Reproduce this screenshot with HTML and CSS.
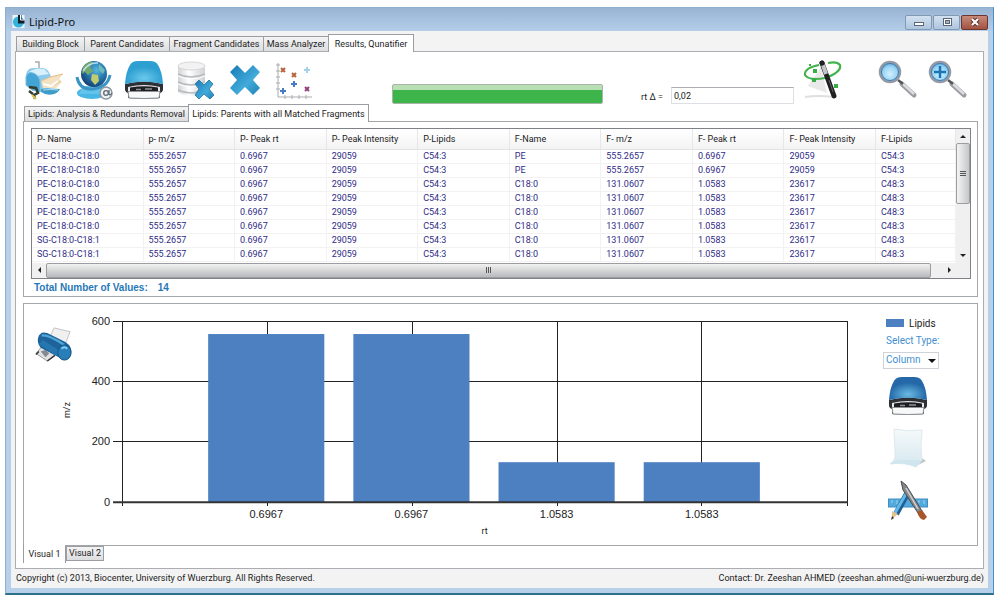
FILE: index.html
```html
<!DOCTYPE html>
<html lang="en">
<head>
<meta charset="utf-8">
<title>Lipid-Pro</title>
<link rel="stylesheet" href="styles.css">
</head>
<body>
<svg class="defs" width="0" height="0" aria-hidden="true">
  <defs>
    <linearGradient id="cross" x1="0" y1="0" x2="1" y2="1"><stop offset="0" stop-color="#1579b4"/><stop offset=".6" stop-color="#42abda"/><stop offset="1" stop-color="#1d80b5"/></linearGradient>
    <radialGradient id="shine" cx=".5" cy=".75" r=".5"><stop offset="0" stop-color="#7fd6f5" stop-opacity=".75"/><stop offset="1" stop-color="#7fd6f5" stop-opacity="0"/></radialGradient>
    <radialGradient id="earth" cx=".6" cy=".35" r=".7"><stop offset="0" stop-color="#58b8dd"/><stop offset=".5" stop-color="#2878ae"/><stop offset="1" stop-color="#123c70"/></radialGradient>
    <radialGradient id="lens" cx=".5" cy=".6" r=".6"><stop offset="0" stop-color="#d2f0fd"/><stop offset=".6" stop-color="#9bd5f5"/><stop offset="1" stop-color="#4f9fd6"/></radialGradient>
    <linearGradient id="metal" x1="0" y1="0" x2="1" y2="0"><stop offset="0" stop-color="#d2d3d5"/><stop offset=".4" stop-color="#fff"/><stop offset="1" stop-color="#d0d1d4"/></linearGradient>
    <linearGradient id="sheet" x1="0" y1="0" x2="0" y2="1"><stop offset="0" stop-color="#f5f9fa"/><stop offset=".8" stop-color="#dcebf1"/><stop offset="1" stop-color="#c4dfeb"/></linearGradient>
    <symbol id="drive" viewBox="0 0 40 40">
      <path d="M1 24Q20 19 39 24V29Q39 32 36 33V38Q20 40 4 38V33Q1 32 1 29Z" fill="#2d3034"/>
      <path d="M1 24Q2 11 6 5 8 1 14 1H26Q32 1 34 5 38 11 39 24 20 19 1 24Z" fill="currentColor"/>
      <path d="M1 24Q2 11 6 5 8 1 14 1H26Q32 1 34 5 38 11 39 24 20 19 1 24Z" fill="url(#shine)"/>
      <path d="M4 27Q20 23 36 27V31H4Z" fill="#e6e8ea"/>
      <path d="M6 27.500Q20 25 34 27.500V31H6Z" fill="#1c1e21"/>
      <path d="M12 29.500H17M21 29H28" stroke="#8d9197" stroke-width="1.500"/>
      <path d="M4 31.500H36L35 38Q20 39 5 38Z" fill="#f7f8f8" stroke="#8f9398"/>
    </symbol>
    <symbol id="glass" viewBox="0 0 40 40">
      <path d="M24 24 36 35" stroke="#9a9ca1" stroke-width="5" stroke-linecap="round"/>
      <path d="M24 23 36 34" stroke="#dcdde0" stroke-width="2.500"/>
      <path d="M20 20 25 24" stroke="#55575b" stroke-width="2.500"/>
      <circle cx="12" cy="12" r="10" fill="url(#lens)" stroke="#9499a3" stroke-width="2.500"/>
      <circle cx="12" cy="12" r="8.500" fill="none" stroke="#3b7fb6"/>
    </symbol>
  </defs>
</svg>

<main class="window">
  <header class="titlebar">
    <svg class="app-icon" viewBox="0 0 12 14"><rect width="12" height="13" y="1" fill="#e9f4fa"/><circle cx="6" cy="8" r="5.500" fill="#35b1dc"/><path d="M5.500 1V9.500H12V6L9 5V1Z" fill="#101c28"/><path d="M8 1V6H12" fill="none" stroke="#fff"/></svg>
    <h1 class="title">Lipid-Pro</h1>
    <div class="window-buttons">
      <button class="win-btn" type="button" aria-label="Minimize"><svg width="12" height="10" viewBox="0 0 12 10"><rect x="1.500" y="5.500" width="9" height="3" fill="#fff" stroke="#5c6674"/></svg></button>
      <button class="win-btn" type="button" aria-label="Maximize"><svg width="12" height="10" viewBox="0 0 12 10"><rect x="2.500" y="1.500" width="8" height="7" fill="#fff" stroke="#5c6674"/><rect x="4.500" y="3.500" width="4" height="3" fill="#9fb4cc" stroke="#5c6674"/></svg></button>
      <button class="win-btn close" type="button" aria-label="Close"><svg width="12" height="10" viewBox="0 0 12 10"><path d="M3 2 9 8M9 2 3 8" stroke="#5b2d25" stroke-width="4"/><path d="M3 2 9 8M9 2 3 8" stroke="#fff" stroke-width="2.200"/></svg></button>
    </div>
  </header>

  <div class="client">
    <nav class="tabs main-tabs" role="tablist">
      <button class="tab t-block" role="tab">Building Block</button>
      <button class="tab t-parent" role="tab">Parent Candidates</button>
      <button class="tab t-fragment" role="tab">Fragment Candidates</button>
      <button class="tab t-mass" role="tab">Mass Analyzer</button>
      <button class="tab t-results active" role="tab" aria-selected="true">Results, Qunatifier</button>
    </nav>

    <section class="page">
      <div class="toolbar">
        <button class="tool" type="button" aria-label="Mailbox"><svg viewBox="0 0 40 40">
          <path d="M11 2H15V12" fill="none" stroke="#a7abb0" stroke-width="1.500"/>
          <path d="M2 25V15Q3 8 9 8H19Q25 9 27 17L29 27 16 32Z" fill="#8ccbed"/>
          <path d="M4 13Q10 7 20 9L25 14 12 16Z" fill="#d9effa"/>
          <path d="M2 25V17Q4 11 9 13 15 15 16 22V32L8 30Z" fill="#43a5d6" stroke="#79bcdc"/>
          <path d="M17 21 26 17 39 14 35 19 38 22 32 28 19 28Z" fill="#f3e1c2"/>
          <path d="M17 21 26 17 39 14M30 25 37 21" fill="none" stroke="#e3bf86"/>
          <path d="M19 24 27 26 34 21" fill="none" stroke="#fff" stroke-width="2"/>
          <path d="M17 29Q25 28 36 29 34 33 30 34 23 36 17 32Z" fill="#3f9cc9"/><path d="M19 30Q26 29 34 30" fill="none" stroke="#a9dcf0"/>
          <path d="M5 27 12 28 14 33 10 35 11 39M5 31 9 34" fill="none" stroke="#333e32" stroke-width="2.500"/>
          <path d="M8 35 12 39" stroke="#e3c755" stroke-width="2"/>
        </svg></button>
        <button class="tool" type="button" aria-label="Web"><svg viewBox="0 0 40 40">
          <ellipse cx="18" cy="33" rx="15" ry="6" fill="#48b7e5"/><path d="M9 26H27L31 34H5Z" fill="#62c4eb"/>
          <path d="M3 17Q5 30 19 29 34 27 36 15" fill="none" stroke="#3995c5" stroke-width="3"/>
          <circle cx="20" cy="14" r="13" fill="url(#earth)"/>
          <path d="M9 7Q14 1 19 2L16 7 19 11 14 15 11 12 8 14Z" fill="#74a86d"/><path d="M18 14 24 15 25 21 21 25 17 20Z" fill="#c1cc71"/><path d="M25 4 31 10 29 14 25 10Z" fill="#6ebbb7"/>
          <path d="M9 11Q15 2 24 3" fill="none" stroke="#d6f0fb" stroke-width="1.500" opacity=".8"/>
          <circle cx="32" cy="33" r="6" fill="#eef2f5" stroke="#8c969f" stroke-width="1.500"/><circle cx="32" cy="33" r="2.300" fill="none" stroke="#5d6974" stroke-width="1.300"/><path d="M35 30V34Q36 36 38 33" fill="none" stroke="#5d6974" stroke-width="1.300"/>
        </svg></button>
        <button class="tool cyan" type="button" aria-label="Save to drive"><svg viewBox="0 0 40 40"><use href="#drive"/></svg></button>
        <button class="tool" type="button" aria-label="Delete data"><svg viewBox="0 0 40 40">
          <path d="M4 6V32Q17 40 31 32V6Z" fill="url(#metal)"/><ellipse cx="17.500" cy="6" rx="13.500" ry="4" fill="#f2f2f3" stroke="#d6d7d9"/>
          <path d="M4 14Q17 20 31 14M4 22Q17 28 31 22M4 30Q17 36 31 30" fill="none" stroke="#b9bbbe" stroke-width="1.500"/>
          <path d="M4 16Q17 22 31 16M4 24Q17 30 31 24" fill="none" stroke="#fff"/>
          <path d="M21 24 25 20 30 25 35 20 39 24 35 29 40 35 36 39 30 34 25 39 21 35 25 29Z" fill="url(#cross)" stroke="#3a83ac"/>
        </svg></button>
        <button class="tool" type="button" aria-label="Remove"><svg viewBox="0 0 40 40"><path d="M6 12 13 5 21 13 29 5 36 12 29 20 36 28 29 35 21 27 13 35 6 28 13 20Z" fill="url(#cross)"/></svg></button>
        <button class="tool" type="button" aria-label="Scatter plot"><svg viewBox="0 0 40 40">
          <path d="M4 3V37H38M2 5h4M2 11h4M2 17h4M2 23h4M2 29h4M11 35v4M18 35v4M25 35v4M32 35v4" fill="none" stroke="#a9abaf"/>
          <path d="M7 8 11 12M11 8 7 12M18 13 22 17M22 13 18 17" stroke="#b5643c" stroke-width="2"/>
          <path d="M31 27 35 31M35 27 31 31" stroke="#944079" stroke-width="2"/>
          <path d="M20 21v6M17 24h6M9 28v6M6 31h6" stroke="#477cc5" stroke-width="2"/><path d="M33 7v6M30 10h6" stroke="#a5d1ec" stroke-width="2"/>
        </svg></button>
        <div class="progress" role="progressbar" aria-label="Progress" aria-valuenow="100" aria-valuemin="0" aria-valuemax="100"></div>
        <label class="rt-label" for="rt">rt Δ =</label>
        <input class="rt-input" id="rt" type="text" value="0,02">
        <button class="tool wand" type="button" aria-label="Wizard"><svg viewBox="0 0 40 40">
          <path d="M18 7 5 26 24 33Z" fill="#d3d4d6" opacity=".5"/><path d="M2 37Q15 35 31 37" fill="none" stroke="#dedfe0" stroke-width="2"/>
          <path d="M16 5Q1 8 2 15 6 21 22 18 39 12 37 5 34 1 25 3" fill="none" stroke="#43b34e" stroke-width="2.200"/>
          <path d="M19 3 31 36" stroke="#202123" stroke-width="5" stroke-linecap="round"/><path d="M20 5 23 14" stroke="#c4c5c7" stroke-width="4"/><path d="M26 20 30 32" stroke="#606164"/>
          <circle cx="19" cy="3" r="2.500" fill="#222"/><path d="M10 9h4v4h-4zM9 18h4v4h-4zM31 24h4v4h-4zM6 4h2v2h-2z" fill="#36ad45"/>
        </svg></button>
        <button class="tool" type="button" aria-label="Search"><svg viewBox="0 0 40 40"><use href="#glass"/></svg></button>
        <button class="tool" type="button" aria-label="Zoom in"><svg viewBox="0 0 40 40"><use href="#glass"/><path d="M12 6V18M6 12H18" stroke="#1976b3" stroke-width="2.500"/></svg></button>
      </div>

      <nav class="tabs inner-tabs" role="tablist">
        <button class="tab t-analysis" role="tab">Lipids: Analysis &amp; Redundants Removal</button>
        <button class="tab t-matched active" role="tab" aria-selected="true">Lipids: Parents with all Matched Fragments</button>
      </nav>

      <section class="panel data-panel">
        <div class="listview">
          <table class="grid">
            <colgroup><col class="c-first"><col><col><col><col><col><col><col><col><col class="c-last"></colgroup>
            <thead><tr><th>P- Name</th><th>p- m/z</th><th>P- Peak rt</th><th>P- Peak Intensity</th><th>P-Lipids</th><th>F-Name</th><th>F- m/z</th><th>F- Peak rt</th><th>F- Peak Intensity</th><th>F-Lipids</th></tr></thead>
            <tbody>
              <tr><td>PE-C18:0-C18:0</td><td>555.2657</td><td>0.6967</td><td>29059</td><td>C54:3</td><td>PE</td><td>555.2657</td><td>0.6967</td><td>29059</td><td>C54:3</td></tr>
              <tr><td>PE-C18:0-C18:0</td><td>555.2657</td><td>0.6967</td><td>29059</td><td>C54:3</td><td>PE</td><td>555.2657</td><td>0.6967</td><td>29059</td><td>C54:3</td></tr>
              <tr><td>PE-C18:0-C18:0</td><td>555.2657</td><td>0.6967</td><td>29059</td><td>C54:3</td><td>C18:0</td><td>131.0607</td><td>1.0583</td><td>23617</td><td>C48:3</td></tr>
              <tr><td>PE-C18:0-C18:0</td><td>555.2657</td><td>0.6967</td><td>29059</td><td>C54:3</td><td>C18:0</td><td>131.0607</td><td>1.0583</td><td>23617</td><td>C48:3</td></tr>
              <tr><td>PE-C18:0-C18:0</td><td>555.2657</td><td>0.6967</td><td>29059</td><td>C54:3</td><td>C18:0</td><td>131.0607</td><td>1.0583</td><td>23617</td><td>C48:3</td></tr>
              <tr><td>PE-C18:0-C18:0</td><td>555.2657</td><td>0.6967</td><td>29059</td><td>C54:3</td><td>C18:0</td><td>131.0607</td><td>1.0583</td><td>23617</td><td>C48:3</td></tr>
              <tr><td>SG-C18:0-C18:1</td><td>555.2657</td><td>0.6967</td><td>29059</td><td>C54:3</td><td>C18:0</td><td>131.0607</td><td>1.0583</td><td>23617</td><td>C48:3</td></tr>
              <tr><td>SG-C18:0-C18:1</td><td>555.2657</td><td>0.6967</td><td>29059</td><td>C54:3</td><td>C18:0</td><td>131.0607</td><td>1.0583</td><td>23617</td><td>C48:3</td></tr>
            </tbody>
          </table>
          <div class="vscroll">
            <svg class="arrow" viewBox="0 0 14 14"><path d="M4 9 7 6 10 9Z"/></svg>
            <div class="vthumb"><i></i><i></i><i></i></div>
            <svg class="arrow down" viewBox="0 0 14 14"><path d="M4 6 7 9 10 6Z"/></svg>
          </div>
          <div class="hscroll">
            <svg class="arrow" viewBox="0 0 14 14"><path d="M9 4 6 7 9 10Z"/></svg>
            <div class="hthumb"><i></i><i></i><i></i></div>
            <svg class="arrow" viewBox="0 0 14 14"><path d="M6 4 9 7 6 10Z"/></svg>
          </div>
          <div class="corner"></div>
        </div>
        <p class="total"><span>Total Number of Values:</span><span>14</span></p>
      </section>

      <section class="panel chart-panel">
        <div class="chart-left">
          <button class="print" type="button" aria-label="Print"><svg viewBox="0 0 40 38">
            <path d="M20 2 37 6 32 19 15 13Z" fill="#f0f0f1" stroke="#bfc1c4"/>
            <path d="M7 22 22 30 13 37 1 29Z" fill="#e1e2e3" stroke="#95989c"/><path d="M6 27 11 25 15 29 11 33Z" fill="#858a91"/><path d="M4 27 1 30M21 31 13 37" stroke="#333" stroke-width="1.500"/>
            <path d="M7 7Q12 6 16 9L32 17Q40 22 38 31 34 38 27 34L6 23Q1 17 4 10Z" fill="#1e639b"/>
            <path d="M7 10Q14 9 31 20" fill="none" stroke="#4fa6d8" stroke-width="2.500"/><path d="M6 17 25 29" stroke="#2677b0" stroke-width="6"/>
            <ellipse cx="31" cy="28" rx="7" ry="8" fill="#287eb9" stroke="#15547f"/><path d="M28 24Q31 21 34 24" fill="none" stroke="#83d0f2" stroke-width="2"/>
          </svg></button>
          <span class="axis-y">m/z</span>
        </div>
        <svg class="chart" viewBox="80 304 790 241" role="img" aria-label="m/z by rt">
          <g class="rules" fill="none">
            <path d="M113 321H847M113 381H847M113 441H847"/>
            <path d="M267 321V506M412 321V506M557 321V506M701 321V506M847 321V506M122 321V506"/>
          </g>
          <g fill="#4c80c1"><rect x="208" y="334" width="116" height="168"/><rect x="353" y="334" width="116" height="168"/><rect x="498" y="462" width="116" height="40"/><rect x="643" y="462" width="116" height="40"/></g>
          <path d="M113 502H847" stroke="#333" stroke-width="2"/>
          <g class="ticks" text-anchor="end"><text x="110" y="325">600</text><text x="110" y="385">400</text><text x="110" y="445">200</text><text x="110" y="506">0</text></g>
          <g class="ticks" text-anchor="middle"><text x="266" y="518">0.6967</text><text x="411" y="518">0.6967</text><text x="556" y="518">1.0583</text><text x="701" y="518">1.0583</text></g>
          <text class="axis-x" x="484" y="534" text-anchor="middle">rt</text>
        </svg>
        <aside class="chart-side">
          <div class="legend"><span class="swatch"></span>Lipids</div>
          <label class="type-label" for="type">Select Type:</label>
          <div class="select-wrap"><select class="type" id="type"><option>Column</option></select><svg class="caret" viewBox="0 0 8 5"><path d="M0 1H8L4 5Z" fill="#111"/></svg></div>
          <button class="side-tool deep" type="button" aria-label="Save chart"><svg viewBox="0 0 40 40"><use href="#drive"/></svg></button>
          <button class="side-tool" type="button" aria-label="New sheet"><svg viewBox="0 0 40 40"><path d="M28 38 38 33 34 30Z" fill="#bfc4c7"/><path d="M6 1Q20 4 34 2 32 18 34 32L28 39Q17 34 2 36 8 32 7 25Z" fill="url(#sheet)" stroke="#dfe9ed"/><path d="M2 36Q7 31 18 32L34 32 28 39Q17 34 2 36Z" fill="#d0e6ef"/></svg></button>
          <button class="side-tool" type="button" aria-label="Drawing tools"><svg viewBox="0 0 40 40">
            <rect x=".5" y="19" width="39" height="8" fill="#54a9dc" stroke="#3d8fc4"/><path d="M4 20v3M9 20v4M14 20v3M26 20v4M31 20v3M36 20v4" stroke="#9ed3ef"/>
            <path d="M20 12 8 34" stroke="#225f96" stroke-width="6"/><path d="M19 12 7 33" stroke="#62bae9" stroke-width="3"/><path d="M4 31 10 34 4 39Z" fill="#e6c48b"/><path d="M4 36 3 40 6 38Z" fill="#333"/>
            <path d="M13 1 18 5 34 31 30 33 15 10Z" fill="#85878b" stroke="#4a4c50"/><path d="M18 8 30 29" stroke="#d2d3d5" stroke-width="1.500"/><path d="M29 32 34 30 39 37 36 40Q31 39 29 32Z" fill="#a6562a"/>
          </svg></button>
        </aside>
      </section>

      <nav class="tabs bottom-tabs" role="tablist">
        <button class="tab t-v1 active" role="tab" aria-selected="true">Visual 1</button>
        <button class="tab t-v2" role="tab">Visual 2</button>
      </nav>
    </section>

    <footer class="status"><span>Copyright (c) 2013, Biocenter, University of Wuerzburg. All Rights Reserved.</span><span>Contact: Dr. Zeeshan AHMED (zeeshan.ahmed@uni-wuerzburg.de)</span></footer>
  </div>
</main>
</body>
</html>
```
FILE: styles.css
```css
* { box-sizing: border-box; }

body {
  margin: 0;
  padding: 7px 6px 6px 5px;
  min-height: 100vh;
  display: flex;
  background: #fff;
  color: #1c1c1c;
  font: 9px/12px Roboto, "Liberation Sans", sans-serif;
}

.defs { position: absolute; }

button, input, select { font: inherit; color: inherit; }
button { padding: 0; border: 0; background: none; }
svg { display: block; }

/* Window frame */
.window {
  flex: 1;
  display: flex;
  flex-direction: column;
  padding: 0 5px 5px;
  background: #b7d0ea;
  border: 1px solid #8eb0d0;
  border-right-color: #4a90c8;
  border-bottom: 2px solid #2c6f88;
}

.titlebar {
  display: flex;
  align-items: center;
  height: 23px;
  margin: 0 -5px;
  padding: 0 5px 0 6px;
  background: linear-gradient(#98b4d3, #b4cee9);
}

.app-icon { width: 13px; height: 14px; margin-top: 3px; }
.title { margin: 4px 0 0 4px; font: 11px/14px "Noto Sans", sans-serif; color: #111; }
.window-buttons { display: flex; gap: 1px; margin: 5px 0 0 auto; }

.win-btn {
  width: 27px;
  height: 15px;
  display: grid;
  place-items: center;
  border: 1px solid #8398b1;
  border-radius: 2px;
  background: linear-gradient(#d3e1f0, #adc5de);
}
.close { border-color: #6d352d; background: linear-gradient(#c98a7b, #a1533f); }

.client { flex: 1; display: flex; flex-direction: column; padding: 3px 4px 0; background: #f3f3f3; }

/* Tabs */
.tabs { display: flex; align-items: flex-end; }
.tab {
  height: 15px;
  margin-left: -1px;
  border: 1px solid #9a9da1;
  border-bottom: 0;
  background: linear-gradient(#f4f4f4, #dcdddf);
  white-space: nowrap;
}
.tab.active { position: relative; height: 18px; margin-bottom: -1px; background: #fff; }

.main-tabs { padding-left: 2px; }
.t-block { width: 69px; }
.t-parent { width: 86px; }
.t-fragment { width: 95px; }
.t-mass { width: 66px; }
.t-results { width: 86px; }

.page { flex: 1; padding: 0 5px 0 7px; border: 1px solid #abadb3; background: #fff; }

/* Toolbar */
.toolbar { display: flex; align-items: flex-end; height: 52px; padding-right: 5px; }
.tool { width: 50px; height: 44px; margin-bottom: 2px; display: grid; place-items: center; }
.tool:first-child { margin-left: -4px; }
.tool svg { width: 40px; height: 40px; }
.tool.cyan { color: #2d9fd0; }
.wand { margin-right: 25px; }

.progress {
  flex: 0 1 211px;
  height: 20px;
  margin-left: 73px;
  border: 1px solid #a9b3a9;
  border-radius: 2px;
  background: linear-gradient(#b9dfb4 0 5px, #3eb54b 5px);
}
.rt-label { margin: 0 8px 1px auto; }
.rt-input {
  width: 123px;
  height: 17px;
  margin: 0 4px 0 0;
  padding: 0 2px;
  border: 1px solid #dcdfe3;
  border-top-color: #abadb3;
  background: #fff;
}

.inner-tabs { padding-left: 2px; }
.t-analysis { width: 165px; }
.t-matched { width: 181px; }

.panel { border: 1px solid #a5a8ab; background: #fff; }
.data-panel { padding: 6px 6px 0 7px; }

/* List view */
.listview {
  display: grid;
  grid-template-columns: 1fr 14px;
  border: 1px solid #7e8186;
}
.grid { width: 100%; table-layout: fixed; border-collapse: collapse; }
.c-first { width: 111px; }
.c-last { width: 80px; }
th {
  height: 20px;
  padding: 0 0 0 5px;
  border-right: 1px solid #e6e7e8;
  border-bottom: 1px solid #e2e3e5;
  background: linear-gradient(#fff, #f3f3f4);
  font-weight: 400;
  text-align: left;
  white-space: nowrap;
}
td {
  height: 14px;
  padding: 0 0 0 5px;
  border: 1px solid #f3f1f2;
  border-width: 0 1px 1px 0;
  color: #2f2c86;
  white-space: nowrap;
}
.vscroll { display: flex; flex-direction: column; background: #f0f0f0; }
.hscroll { display: flex; height: 15px; margin-top: 1px; background: #f0f0f0; }
.corner { background: #f0f0f0; }
.arrow { flex: none; width: 14px; height: 14px; fill: #222; }
.arrow.down { margin-top: auto; }
.vthumb, .hthumb { display: flex; align-items: center; justify-content: center; gap: 1px; border: 1px solid #9b9da0; border-radius: 2px; }
.vthumb { flex: 0 0 61px; flex-direction: column; background: linear-gradient(90deg, #f4f4f4, #c6c7c9); }
.hthumb { flex: 1; margin-right: 11px; background: linear-gradient(#f2f2f2, #b8b9bb); }
.vthumb i { width: 6px; height: 1px; background: #555; }
.hthumb i { width: 1px; height: 6px; background: #555; }

.total {
  display: flex;
  gap: 10px;
  margin: 2px 0 1px 3px;
  color: #2878b8;
  font: bold 10px/14px "Liberation Sans", sans-serif;
}

/* Chart */
.chart-panel { display: flex; margin-top: 6px; }
.chart-left { flex: 0 0 56px; display: flex; flex-direction: column; padding: 22px 0 0 11px; }
.print, .print svg { width: 38px; height: 36px; }
.axis-y { margin: 40px 0 0 26px; writing-mode: vertical-rl; transform: rotate(180deg); align-self: flex-start; }
.chart { flex: 1; min-width: 0; }
.rules { stroke: #222; stroke-width: 1; shape-rendering: crispEdges; }
.ticks { font: 11px "Liberation Sans", sans-serif; fill: #222; }
.axis-x { font: 9px Roboto, sans-serif; fill: #222; }

.chart-side { flex: 0 0 106px; display: flex; flex-direction: column; align-items: flex-start; padding: 13px 0 0 12px; }
.legend { display: flex; align-items: center; gap: 5px; margin-left: 3px; font-size: 9px; line-height: 13px; }
.swatch { width: 18px; height: 8px; background: #4c80c1; }
.type-label { margin: 4px 0 5px 3px; color: #3f8fd0; font-size: 9px; line-height: 13px; }
.select-wrap { display: grid; align-items: center; margin-bottom: 7px; }
.select-wrap > * { grid-area: 1 / 1; }
.type { width: 56px; height: 17px; padding: 0 2px; appearance: none; border: 1px solid #cfd2d6; background: #fff; color: #3f8fd0; }
.caret { width: 8px; height: 5px; justify-self: end; margin-right: 3px; pointer-events: none; }
.side-tool { width: 40px; height: 40px; margin: 0 0 12px 5px; }
.side-tool.deep { color: #2468a8; }
.legend, .type-label, .type { font-size: 10px; }

.bottom-tabs { align-items: flex-start; }
.bottom-tabs .tab { margin: 0; border: 1px solid #9a9da1; }
.bottom-tabs .tab.active { height: 18px; margin-top: -1px; border-width: 0 1px; }
.t-v1 { width: 43px; }
.t-v2 { width: 38px; }

.status { display: flex; justify-content: space-between; padding: 3px 0 4px 1px; }
```
